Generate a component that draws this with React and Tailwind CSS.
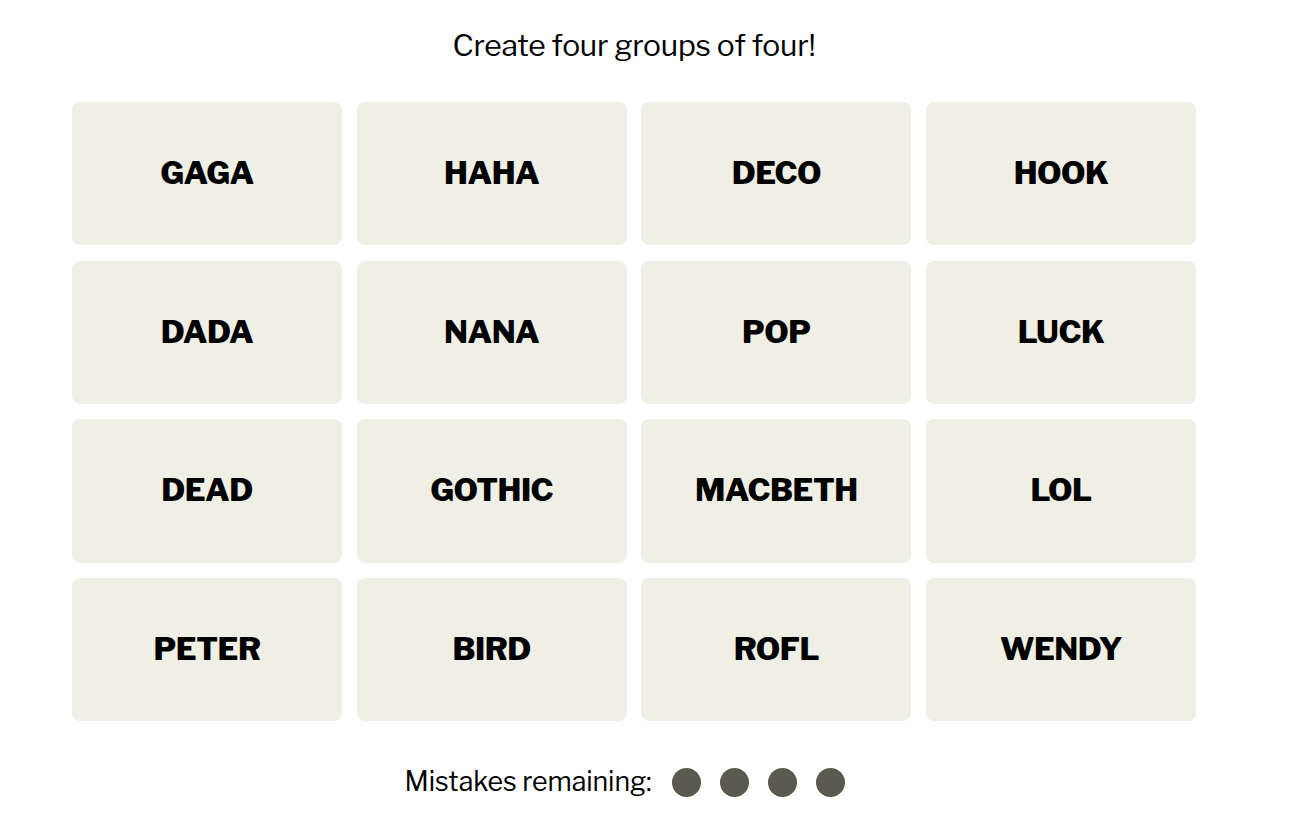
import React from "react";

const words = [
  "GAGA", "HAHA", "DECO", "HOOK",
  "DADA", "NANA", "POP", "LUCK",
  "DEAD", "GOTHIC", "MACBETH", "LOL",
  "PETER", "BIRD", "ROFL", "WENDY",
];

export default function App() {
  return (
    <div className="w-[1316px] h-[832px] bg-white text-black" style={{ fontFamily: "'Libre Franklin', Roboto, 'Liberation Sans', sans-serif" }}>
      <div className="ml-[72px] w-[1124px] flex flex-col items-center">
        <div className="h-[102px] flex items-center pb-[12px] text-[30px] leading-none tracking-[-0.25px]">
          Create four groups of four!
        </div>
        <div className="w-full grid grid-cols-4 gap-x-[14.67px] gap-y-[15.5px]">
          {words.map((w) => (
            <div key={w} className="h-[143.2px] rounded-lg bg-[#efefe6] flex items-center justify-center text-[31.5px] font-extrabold tracking-[-0.5px] leading-none">
              {w}
            </div>
          ))}
        </div>
        <div className="mt-[47px] flex items-center pr-[18px]">
          <span className="text-[26.8px] leading-none tracking-[-0.1px]">Mistakes remaining:</span>
          <div className="ml-[20px] flex gap-[19.3px]">
            <span className="w-[29px] h-[29px] rounded-full bg-[#5a594e]" />
            <span className="w-[29px] h-[29px] rounded-full bg-[#5a594e]" />
            <span className="w-[29px] h-[29px] rounded-full bg-[#5a594e]" />
            <span className="w-[29px] h-[29px] rounded-full bg-[#5a594e]" />
          </div>
        </div>
      </div>
    </div>
  );
}
